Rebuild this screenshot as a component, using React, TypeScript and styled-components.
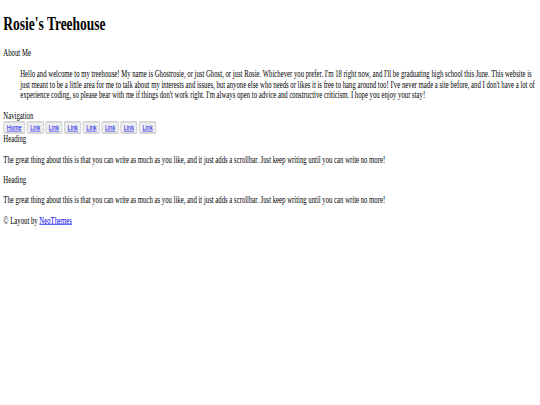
import styled, { createGlobalStyle } from 'styled-components'

const navLinks = ['Home', 'Link', 'Link', 'Link', 'Link', 'Link', 'Link', 'Link']

const posts = [
  {
    title: 'Heading',
    body: 'The great thing about this is that you can write as much as you like, and it just adds a scrollbar. Just keep writing until you can write no more!',
  },
  {
    title: 'Heading',
    body: 'The great thing about this is that you can write as much as you like, and it just adds a scrollbar. Just keep writing until you can write no more!',
  },
]

export default function App() {
  return (
    <>
      <GlobalStyle />
      <Page>
        <Title>Rosie's Treehouse</Title>
        <Label>About Me</Label>
        <Intro>
          Hello and welcome to my treehouse! My name is Ghostrosie, or just
          Ghost, or just Rosie. Whichever you prefer. I'm 18 right now, and
          I'll be graduating high school this June. This website is just meant
          to be a little area for me to talk about my interests and issues, but
          anyone else who needs or likes it is free to hang around too! I've
          never made a site before, and I don't have a lot of experience
          coding, so please bear with me if things don't work right. I'm always
          open to advice and constructive criticism. I hope you enjoy your
          stay!
        </Intro>

        <Nav>
          <NavTitle>Navigation</NavTitle>
          <ButtonRow>
            {navLinks.map((label, i) => (
              <NavButton key={i} type="button">
                <ButtonLink href="#">{label}</ButtonLink>
              </NavButton>
            ))}
          </ButtonRow>
        </Nav>

        <Content>
          {posts.map((post, i) => (
            <Post key={i}>
              <PostTitle>{post.title}</PostTitle>
              <PostBody>{post.body}</PostBody>
            </Post>
          ))}
        </Content>

        <Footer>
          © Layout by <TextLink href="#">NeoThemes</TextLink>
        </Footer>
      </Page>
    </>
  )
}

const GlobalStyle = createGlobalStyle`
  html, body {
    margin: 0;
    padding: 0;
    background: #ffffff;
    overflow: hidden;
  }
  body {
    font-family: "Liberation Serif", "Times New Roman", serif;
    font-size: 16px;
    color: #000000;
  }
`

/* the reference was shot wide and squeezed down, so the page is laid out
   at its original size and scaled to fit */
const Page = styled.div`
  width: 1283px;
  box-sizing: border-box;
  padding: 0 8px;
  transform: scale(0.421, 0.6);
  transform-origin: 0 0;
  overflow: hidden;
`

const Title = styled.h1`
  font-size: 32px;
  font-weight: bold;
  margin: 21.44px 0;
`

const Label = styled.p`
  margin: 0;
`

const Intro = styled.p`
  margin: 16px 0 16px 40px;
`

const Nav = styled.div``

const NavTitle = styled.div``

const ButtonRow = styled.div`
  display: flex;
  gap: 4px;
`

const NavButton = styled.button`
  font-family: "Liberation Sans", Arial, sans-serif;
  font-size: 13.33px;
  padding: 1px 6px;
  background: #efefef;
  border: 2px solid #c8c8c8;
  border-radius: 3px;
  line-height: normal;
`

const ButtonLink = styled.a`
  color: #0000ee;
  text-decoration: underline;
`

const Content = styled.div``

const Post = styled.div`
  &:first-child > :first-child {
    margin-top: 0;
  }
`

const PostTitle = styled.p`
  margin: 16px 0;
`

const PostBody = styled.p`
  margin: 16px 0;
`

const Footer = styled.p`
  margin: 16px 0;
`

const TextLink = styled.a`
  color: #0000ee;
  text-decoration: underline;
`
